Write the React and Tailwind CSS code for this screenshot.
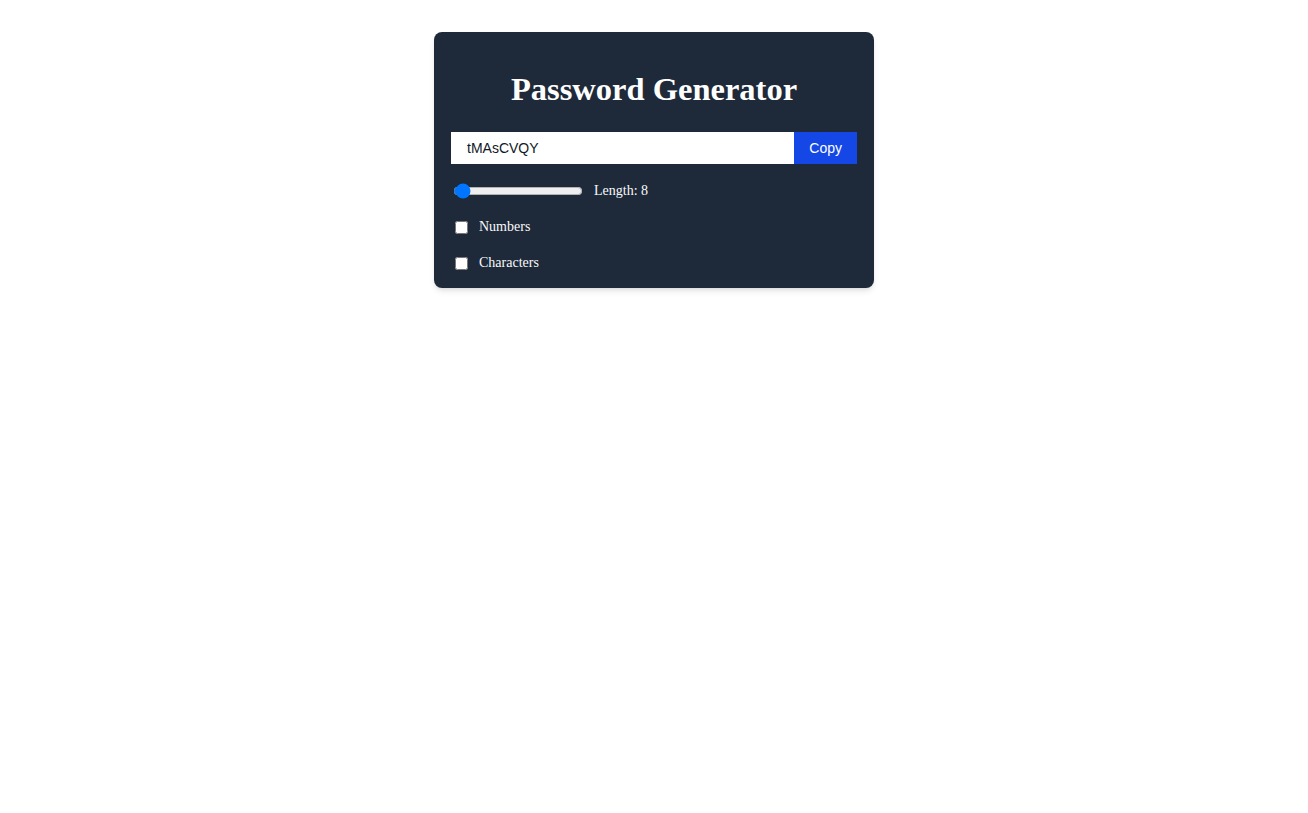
import React, { useState } from 'react';

const serif = "font-['Liberation_Serif','Times_New_Roman',serif]";
const sans = "font-['Liberation_Sans',Arial,sans-serif]";

export default function App() {
  const [length, setLength] = useState(8);
  const [numbers, setNumbers] = useState(false);
  const [chars, setChars] = useState(false);

  return (
    <div className="min-h-screen w-full bg-white pt-8">
      <div className="mx-auto w-[440px] rounded-lg bg-gray-800 px-[17px] pt-[39px] pb-[15px] shadow-md">
        <h1 className={`${serif} text-center text-[32.5px] font-bold leading-9 text-white`}>
          Password Generator
        </h1>

        <div className="mt-[25px] flex flex-col gap-4">
          <div className="mb-px flex h-8 overflow-hidden">
            <input
              type="text"
              readOnly
              value="tMAsCVQY"
              className={`${sans} w-full bg-white px-4 text-sm text-gray-900 outline-none`}
            />
            <button className={`${sans} shrink-0 bg-blue-700 px-[15px] text-sm text-white`}>
              Copy
            </button>
          </div>

          <div className="flex h-5 items-center gap-[11px]">
            <input
              type="range"
              min={6}
              max={100}
              value={length}
              onChange={(e) => setLength(Number(e.target.value))}
              className="ml-0.5 w-[130px] cursor-pointer"
            />
            <label className={`${serif} text-sm text-gray-50`}>Length: {length}</label>
          </div>

          <div className="flex h-5 items-center gap-[11px]">
            <input type="checkbox" className="ml-1" checked={numbers} onChange={() => setNumbers(!numbers)} />
            <label className={`${serif} text-sm text-gray-50`}>Numbers</label>
          </div>

          <div className="flex h-5 items-center gap-[11px]">
            <input type="checkbox" className="ml-1" checked={chars} onChange={() => setChars(!chars)} />
            <label className={`${serif} text-sm text-gray-50`}>Characters</label>
          </div>
        </div>
      </div>
    </div>
  );
}
